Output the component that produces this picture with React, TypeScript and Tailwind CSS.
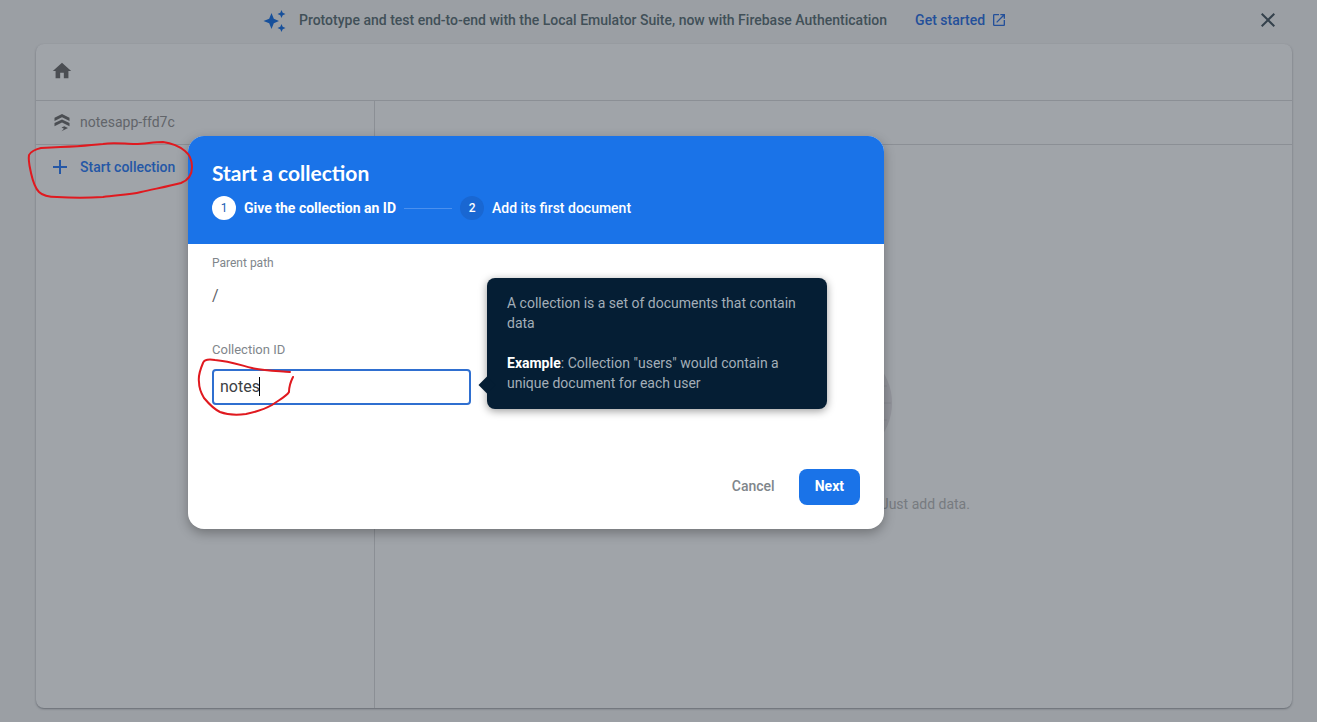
import React, { useState } from 'react';

const SparkIcon = () => (
  <svg viewBox="0 0 24 24" className="h-6 w-6 shrink-0 fill-[#17509b]" aria-hidden="true">
    <path d="M8.500 5 10.800 10.700 16 13 10.800 15.300 8.500 21 6.200 15.300 0.500 13 6.200 10.700Z" />
    <path d="M18.500 2 19.700 4.800 22.500 6 19.700 7.200 18.500 10 17.300 7.200 14.500 6 17.300 4.800Z" />
    <path d="M18.500 16 19.700 18.800 22.500 20 19.700 21.200 18.500 24 17.300 21.200 14.500 20 17.300 18.800Z" />
  </svg>
);

const OpenInNewIcon = () => (
  <svg viewBox="0 0 24 24" className="h-4 w-4 fill-current" aria-hidden="true">
    <path d="M19 19H5V5h7V3H5a2 2 0 0 0-2 2v14a2 2 0 0 0 2 2h14c1.1 0 2-.9 2-2v-7h-2v7zM14 3v2h3.59l-9.83 9.83 1.41 1.41L19 6.41V10h2V3h-7z" />
  </svg>
);

const CloseIcon = () => (
  <svg viewBox="0 0 24 24" className="h-6 w-6 fill-current" aria-hidden="true">
    <path d="M19 6.41 17.59 5 12 10.59 6.41 5 5 6.41 10.59 12 5 17.59 6.41 19 12 13.41 17.59 19 19 17.59 13.41 12z" />
  </svg>
);

const HomeIcon = () => (
  <svg viewBox="0 0 24 24" className="h-[22px] w-[22px] fill-current" aria-hidden="true">
    <path d="M10 20v-6h4v6h5v-8h3L12 3 2 12h3v8z" />
  </svg>
);

const FirestoreIcon = () => (
  <svg viewBox="0 0 20 20" className="h-5 w-5 fill-current text-[#4b4e53]" aria-hidden="true">
    <path d="M10 2 17.500 5.700V8.900L10 5.200 2.500 8.900V5.700Z" />
    <path d="M10 7.400 17.500 11.100V14.300L10 10.600 2.500 14.300V11.100Z" />
    <path d="M9.500 15.600 12.300 14.200 16 16 9.500 19.200 12 16.800Z" />
  </svg>
);

const PlusIcon = () => (
  <svg viewBox="0 0 24 24" className="h-6 w-6 fill-current" aria-hidden="true">
    <path d="M19 13h-6v6h-2v-6H5v-2h6V5h2v6h6z" />
  </svg>
);

function Banner() {
  return (
    <header className="flex h-11 items-center pb-1 pl-[18px] pr-[33px] text-sm font-medium">
      <div className="flex flex-1 items-center justify-center">
        <SparkIcon />
        <p className="ml-3 text-[#415058]">
          Prototype and test end-to-end with the Local Emulator Suite, now with Firebase Authentication
        </p>
        <a href="#emulator" className="ml-7 flex items-center gap-1.5 text-[#24509a]">
          Get started
          <OpenInNewIcon />
        </a>
      </div>
      <button type="button" aria-label="Dismiss" className="flex w-8 items-center justify-center text-[#34414c]">
        <CloseIcon />
      </button>
    </header>
  );
}

function DataPanel() {
  return (
    <main className="mb-3.5 ml-9 mr-[25px] flex flex-1 flex-col rounded-lg bg-[#a0a4a9] shadow-[0_1px_2px_rgba(50,55,65,0.5)]">
      <nav className="flex h-14 items-center px-[15px] pb-0.5 text-[#4b4e53]">
        <a href="#root" aria-label="Home">
          <HomeIcon />
        </a>
      </nav>
      <div className="flex flex-1 border-t border-[#8b8f95]">
        <section className="w-[339px] border-r border-[#8b8f95]">
          <div className="flex h-11 items-center gap-2 border-b border-[#8b8f95] px-4 pb-0.5 text-sm text-[#62656a]">
            <FirestoreIcon />
            notesapp-ffd7c
          </div>
          <button type="button" className="flex h-11 items-center gap-2 px-3 text-sm font-medium text-[#2457a6]">
            <PlusIcon />
            Start collection
          </button>
        </section>
        <section className="flex flex-1 flex-col">
          <div className="h-11 border-b border-[#8b8f95]" />
          <div className="flex flex-1 flex-col items-center pt-[200px]">
            <svg viewBox="0 0 116 116" className="h-[116px] w-[116px]" aria-hidden="true">
              <circle cx="58" cy="58" r="58" fill="#93959c" />
              <path d="M5 41H111M1 58H115M5 75H111" stroke="#888b92" />
            </svg>
            <p className="mt-[33px] text-sm text-[#777b80]">Your database is ready to go. Just add data.</p>
          </div>
        </section>
      </div>
    </main>
  );
}

function HelpTooltip() {
  return (
    <div
      role="tooltip"
      className="absolute left-[299px] top-[142px] w-[340px] rounded-lg bg-[#051e34] px-5 pb-4 pt-[15px] text-sm/5 text-[#a3aeb8] shadow-[0_2px_8px_rgba(0,0,0,0.4)]"
    >
      <span className="absolute -left-1.5 bottom-[18px] h-3 w-3 rotate-45 bg-[#051e34]" />
      <p>A collection is a set of documents that contain data</p>
      <p className="mt-5">
        <b className="font-bold text-white">Example</b>: Collection "users" would contain a unique document for each
        user
      </p>
    </div>
  );
}

function StartCollectionDialog() {
  const [collectionId, setCollectionId] = useState('notes');

  return (
    <div
      role="dialog"
      aria-labelledby="dialog-title"
      className="absolute left-[188px] top-[136px] w-[696px] rounded-2xl bg-white shadow-[0_4px_12px_rgba(0,0,0,0.3)]"
    >
      <div className="h-[108px] rounded-t-2xl bg-[#1a73e8] px-6 pt-[23px] text-sm text-white">
        <h2 id="dialog-title" className="font-['Lato'] text-[21px]/7 font-bold">
          Start a collection
        </h2>
        <ol className="mt-[9px] flex items-center gap-2 font-medium">
          <li className="flex items-center gap-2 font-bold">
            <span className="flex h-6 w-6 items-center justify-center rounded-full bg-white text-xs font-normal text-[#1a5fb4]">
              1
            </span>
            Give the collection an ID
          </li>
          <li className="h-px w-12 bg-[#4b90ee]" aria-hidden="true" />
          <li className="flex items-center gap-2">
            <span className="flex h-6 w-6 items-center justify-center rounded-full bg-[#1967d2] text-xs">2</span>
            Add its first document
          </li>
        </ol>
      </div>

      <form className="px-6 pb-6 pt-[11px]" onSubmit={(e) => e.preventDefault()}>
        <p className="text-xs/4 text-[#80868b]">Parent path</p>
        <p className="mt-[15px] text-base/5 text-[#5f6368]">/</p>

        <label htmlFor="collection-id" className="mt-9 block text-[13px]/4 text-[#80868b]">
          Collection ID
        </label>
        <div className="relative mt-[11px] w-[259px]">
          <input
            id="collection-id"
            type="text"
            value={collectionId}
            onChange={(e) => setCollectionId(e.target.value)}
            className="block h-9 w-full rounded border-2 border-[#2f6fd0] bg-white px-1.5 pb-0.5 text-base text-[#3c4043] caret-transparent outline-none"
          />
          <span className="absolute left-[47px] top-2 h-[19px] w-px bg-black" />
        </div>

        <div className="mt-16 flex justify-end gap-2">
          <button type="button" className="h-9 px-4 pb-0.5 text-sm font-medium text-[#80868b]">
            Cancel
          </button>
          <button type="submit" className="h-9 rounded-lg bg-[#1a73e8] px-4 pb-0.5 text-sm font-bold text-white">
            Next
          </button>
        </div>
      </form>

      <HelpTooltip />
    </div>
  );
}

// hand-drawn marks around the button and the input
function Marks() {
  return (
    <svg
      viewBox="0 0 320 430"
      className="pointer-events-none absolute left-0 top-0 h-[430px] w-[320px] fill-none stroke-[#e0191f]"
      strokeWidth="2"
      strokeLinecap="round"
      strokeLinejoin="round"
      aria-hidden="true"
    >
      <path d="M41 148C36 149 30 152 29 155C28 161 30 168 31 173C33 182 35 188 39 192C43 196 49 197 57 197C72 198 88 198 103 197C117 195 129 195 141 192C154 189 170 186 181 183C189 180 192 174 192 167C192 160 190 155 185 151C179 146 171 143 163 142C153 142 145 144 135 144C125 144 113 142 103 144C85 146 65 147 41 148Z" />
      <path d="M290 372C280 371 264 371 252 368C240 365 229 361 215 360C209 359 204 360 203 363C200 370 198 376 199 382C199 387 201 393 204 398C209 404 214 409 220 412C228 415 238 415 246 414C256 412 265 409 272 405C279 400 287 396 289 392C289 387 291 381 293 377" />
    </svg>
  );
}

export default function App() {
  return (
    <div className="relative flex min-h-screen flex-col bg-[#9b9fa4] font-['Roboto',sans-serif]">
      <Banner />
      <DataPanel />
      <StartCollectionDialog />
      <Marks />
    </div>
  );
}
